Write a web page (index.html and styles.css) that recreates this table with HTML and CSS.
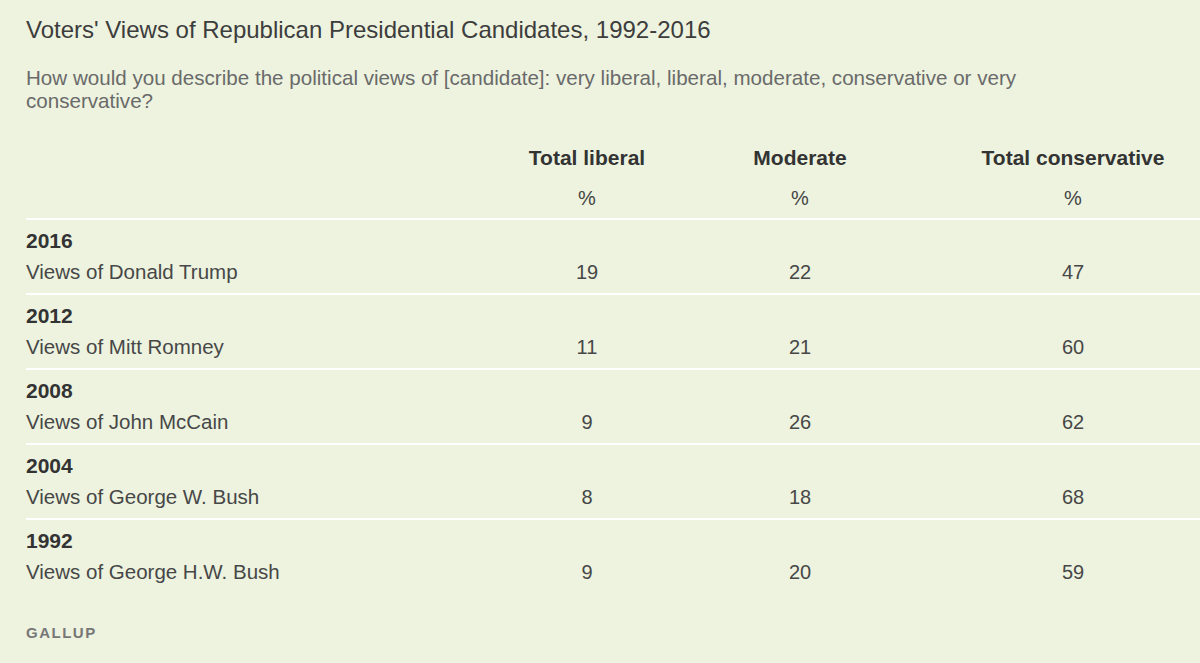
FILE: index.html
```html
<!DOCTYPE html>
<html>
<head>
<meta charset="utf-8">
<link rel="stylesheet" href="styles.css">
</head>
<body>
<div class="page">
  <h1 class="title">Voters' Views of Republican Presidential Candidates, 1992-2016</h1>
  <p class="question">How would you describe the political views of [candidate]: very liberal, liberal, moderate, conservative or very conservative?</p>
  <div class="table">
    <div class="head">
      <div class="label"></div>
      <div class="col c1"><div class="hname">Total liberal</div><div class="pct">%</div></div>
      <div class="col c2"><div class="hname">Moderate</div><div class="pct">%</div></div>
      <div class="col c3"><div class="hname">Total conservative</div><div class="pct">%</div></div>
    </div>
    <div class="row">
      <div class="label"><div class="year">2016</div><div class="name">Views of Donald Trump</div></div>
      <div class="col c1 num">19</div><div class="col c2 num">22</div><div class="col c3 num">47</div>
    </div>
    <div class="row">
      <div class="label"><div class="year">2012</div><div class="name">Views of Mitt Romney</div></div>
      <div class="col c1 num">11</div><div class="col c2 num">21</div><div class="col c3 num">60</div>
    </div>
    <div class="row">
      <div class="label"><div class="year">2008</div><div class="name">Views of John McCain</div></div>
      <div class="col c1 num">9</div><div class="col c2 num">26</div><div class="col c3 num">62</div>
    </div>
    <div class="row">
      <div class="label"><div class="year">2004</div><div class="name">Views of George W. Bush</div></div>
      <div class="col c1 num">8</div><div class="col c2 num">18</div><div class="col c3 num">68</div>
    </div>
    <div class="row last">
      <div class="label"><div class="year">1992</div><div class="name">Views of George H.W. Bush</div></div>
      <div class="col c1 num">9</div><div class="col c2 num">20</div><div class="col c3 num">59</div>
    </div>
  </div>
  <div class="source">GALLUP</div>
</div>
</body>
</html>
```
FILE: styles.css
```css
html, body {
  margin: 0;
  padding: 0;
  background: #edf3df;
  height: 100%;
  overflow: hidden;
}
.page {
  padding: 16px 0 0 26px;
  font-family: "Liberation Sans", Arial, sans-serif;
  color: #444;
}
.title {
  margin: 0;
  font-size: 24px;
  line-height: 28px;
  font-weight: normal;
  color: #3d3d3d;
}
.question {
  margin: 22px 0 0;
  font-size: 20.6px;
  line-height: 23px;
  color: #6a6a6a;
  max-width: 1030px;
}
.table {
  margin-top: 34px;
}
.head, .row {
  display: grid;
  grid-template-columns: 454px 214px 212px 294px;
}
.head {
  padding-bottom: 8px;
  border-bottom: 2px solid #ffffff;
}
.row {
  padding: 9px 0;
  border-bottom: 2px solid #ffffff;
  align-items: end;
}
.row.last {
  border-bottom: none;
}
.col {
  text-align: center;
}
.c3 {
  padding-left: 40px;
}
.hname {
  font-size: 21px;
  line-height: 24px;
  font-weight: bold;
  color: #333;
}
.pct {
  margin-top: 16px;
  font-size: 20px;
  line-height: 24px;
  color: #444;
}
.year {
  font-size: 21px;
  line-height: 24px;
  font-weight: bold;
  color: #333;
}
.name {
  margin-top: 7px;
  font-size: 20.5px;
  line-height: 24px;
  color: #474747;
}
.num {
  font-size: 20px;
  line-height: 24px;
  color: #474747;
}
.source {
  margin-top: 31px;
  font-size: 15px;
  line-height: 18px;
  font-weight: bold;
  letter-spacing: 1.5px;
  color: #777;
}
```
